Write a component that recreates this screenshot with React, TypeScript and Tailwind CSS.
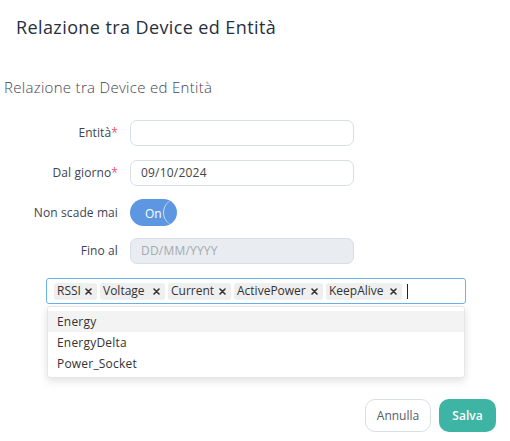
import React from "react";

const XIcon = () => (
  <svg width="7" height="7" viewBox="0 0 7 7" className="shrink-0">
    <path d="M1 1L6 6M6 1L1 6" stroke="#333" strokeWidth="1.6" strokeLinecap="round" />
  </svg>
);

const Tag = ({ label, w }: { label: string; w: string }) => (
  <span className={`flex h-[17px] items-center justify-between rounded-[3px] bg-[#efefef] pl-[3px] pr-[5px] text-[12px] text-[#333] ${w}`}>
    <span>{label}</span>
    <XIcon />
  </span>
);

export default function App() {
  return (
    <div
      className="relative h-[441px] w-[510px] overflow-hidden bg-white"
      style={{ fontFamily: '"Open Sans", "Liberation Sans", sans-serif' }}
    >
      <h1 className="pl-4 pt-[15px] text-[18px] font-medium leading-[25px] tracking-[0.4px] text-[#263040]">
        Relazione tra Device ed Entità
      </h1>
      <h2 className="mt-[37px] pl-1 text-[15px] font-light leading-[20px] tracking-[0.3px] text-[#3f4652]">
        Relazione tra Device ed Entità
      </h2>

      <div className="mt-[23px] flex flex-col">
        <div className="flex h-[26px] items-center gap-3">
          <label className="w-[118px] text-right text-[12px] tracking-[0.1px] text-[#3d4451]">
            Entità<span className="text-[#f0506e]">*</span>
          </label>
          <div className="h-[26px] w-[224px] rounded-[7px] border border-[#d6dee7] bg-white" />
        </div>
        <div className="mt-[14px] flex h-[26px] items-center gap-3">
          <label className="w-[118px] text-right text-[12px] tracking-[0.1px] text-[#3d4451]">
            Dal giorno<span className="text-[#f0506e]">*</span>
          </label>
          <div className="flex h-[26px] w-[224px] items-center rounded-[7px] border border-[#d6dee7] bg-white pl-[10px] text-[12px] tracking-[0.2px] text-[#444]">
            09/10/2024
          </div>
        </div>
        <div className="mt-[13px] flex h-[27px] items-center gap-3">
          <label className="w-[118px] text-right text-[12px] tracking-[0.1px] text-[#3d4451]">Non scade mai</label>
          <div className="relative flex h-[27px] w-[47px] items-center rounded-full bg-[#5e97e1]">
            <span className="ml-[15px] mt-[3px] text-[12px] text-white">On</span>
            <span className="absolute right-0 top-0 h-[27px] w-[14px] rounded-l-full border-l border-white/70" />
          </div>
        </div>
        <div className="mt-[12px] flex h-[26px] items-center gap-3">
          <label className="w-[118px] text-right text-[12px] tracking-[0.1px] text-[#3d4451]">Fino al</label>
          <div className="flex h-[26px] w-[224px] items-center rounded-[7px] border border-[#d6dee7] bg-[#e9edf1] pl-[10px] text-[12px] tracking-[0.2px] text-[#a3a9b0]">
            DD/MM/YYYY
          </div>
        </div>
      </div>

      <div className="ml-[46px] mt-[14px] w-[420px]">
        <div className="flex h-[26px] items-center gap-[3px] rounded-[3px] border border-[#6cb1ea] pl-[7px]">
          <Tag label="RSSI" w="w-[43px]" />
          <Tag label="Voltage" w="w-[65px]" />
          <Tag label="Current" w="w-[63px]" />
          <Tag label="ActivePower" w="w-[89px]" />
          <Tag label="KeepAlive" w="w-[76px]" />
          <span className="ml-[2px] h-[15px] w-px bg-[#222]" />
        </div>
        <div className="ml-px mt-[2px] w-[418px] rounded-[3px] border border-[#e6e6e6] bg-white pb-[3px] pt-[4px] shadow-[0_3px_8px_rgba(0,0,0,0.12)]">
          <div className="flex h-[21px] items-center bg-[#f3f3f3] pl-[9px] text-[12px] tracking-[0.2px] text-[#333]">Energy</div>
          <div className="flex h-[21px] items-center pl-[9px] text-[12px] tracking-[0.2px] text-[#333]">EnergyDelta</div>
          <div className="flex h-[21px] items-center pl-[9px] text-[12px] tracking-[0.2px] text-[#333]">Power_Socket</div>
        </div>
      </div>

      <div className="mr-[14px] mt-[21px] flex justify-end gap-2">
        <button className="h-[33px] w-[66px] rounded-[10px] border border-[#d8dee6] bg-white text-[12px] text-[#555b63]">
          Annulla
        </button>
        <button className="h-[33px] w-[57px] rounded-[10px] bg-[#3db4a4] text-[12px] font-semibold text-white">
          Salva
        </button>
      </div>
    </div>
  );
}
